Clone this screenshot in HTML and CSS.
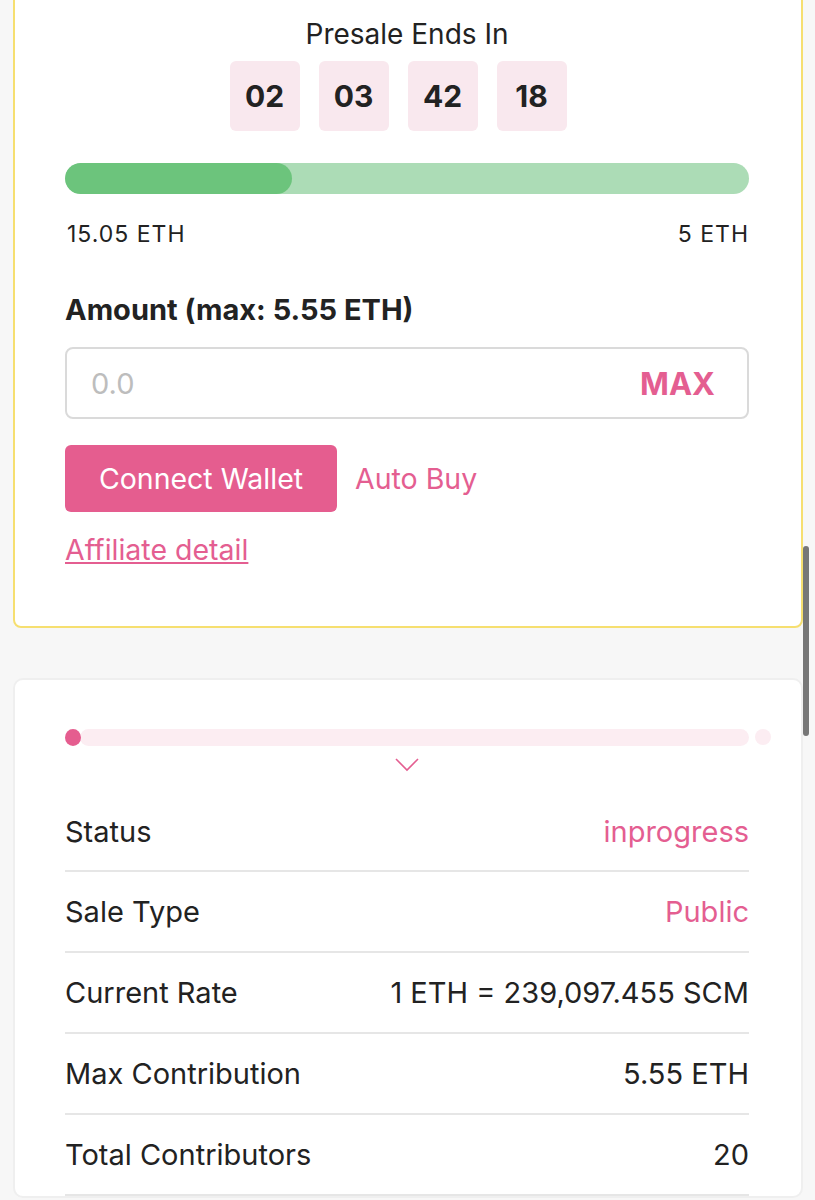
FILE: index.html
```html
<!DOCTYPE html>
<html>
  <head>
    <title>Presale</title>
    <link rel="stylesheet" href="styles.css">
  </head>
  <body>
    <div class="page">
      <section class="sale-card">
        <h2 class="countdown__title">Presale Ends In</h2>
        <div class="countdown">
          <span class="countdown__cell">02</span>
          <span class="countdown__cell">03</span>
          <span class="countdown__cell">42</span>
          <span class="countdown__cell">18</span>
        </div>

        <div class="raise-bar"><div class="raise-bar__fill" style="width: 33.2%"></div></div>
        <div class="raise-labels">
          <span>15.05 ETH</span>
          <span>5 ETH</span>
        </div>

        <label class="amount-label" for="amount">Amount (max: 5.55 ETH)</label>
        <div class="amount-field">
          <input id="amount" class="amount-field__input" type="text" placeholder="0.0">
          <button class="amount-field__max" type="button">MAX</button>
        </div>

        <div class="actions">
          <button class="btn-connect" type="button">Connect Wallet</button>
          <a class="link-auto" href="#">Auto Buy</a>
        </div>

        <a class="link-affiliate" href="#">Affiliate detail</a>
      </section>

      <section class="info-card">
        <div class="stage">
          <span class="stage__dot"></span>
          <span class="stage__track"></span>
          <span class="stage__end"></span>
        </div>
        <div class="stage__toggle">
          <svg width="24" height="14" viewBox="0 0 24 14"><path d="M1 1 L12 12 L23 1" fill="none" stroke="#e45e91" stroke-width="1.6"/></svg>
        </div>

        <ul class="info-list">
          <li class="info-row"><span>Status</span><span class="info-row__value--pink">inprogress</span></li>
          <li class="info-row"><span>Sale Type</span><span class="info-row__value--pink">Public</span></li>
          <li class="info-row"><span>Current Rate</span><span>1 ETH = 239,097.455 SCM</span></li>
          <li class="info-row"><span>Max Contribution</span><span>5.55 ETH</span></li>
          <li class="info-row"><span>Total Contributors</span><span>20</span></li>
        </ul>
      </section>
    </div>
    <div class="scroll-thumb"></div>
  </body>
</html>
```

FILE: styles.css
```css
body {
  margin: 0;
  background: #f7f7f7;
  font-family: Inter, Roboto, "Liberation Sans", Arial, sans-serif;
  color: #222;
  overflow: hidden;
}

.page {
  padding: 0 12px 0 13px;
}

.sale-card {
  margin-top: -12px;
  background: #fff;
  border: 2px solid #f6df70;
  border-radius: 8px;
  padding: 28px 52px 60px 50px;
}

.countdown__title {
  margin: 0;
  text-align: center;
  font-size: 28px;
  font-weight: 400;
  line-height: 32px;
}

.countdown {
  display: flex;
  justify-content: center;
  gap: 19px;
  margin-top: 11px;
  padding-right: 18px;
}
.countdown__cell {
  width: 70px;
  height: 70px;
  display: flex;
  align-items: center;
  justify-content: center;
  background: #f9e8ee;
  border-radius: 6px;
  font-size: 30px;
  font-weight: 700;
}

.raise-bar {
  margin-top: 32px;
  height: 31px;
  border-radius: 16px;
  background: #acdcb6;
  overflow: hidden;
}
.raise-bar__fill {
  height: 100%;
  background: #6cc47c;
  border-radius: 16px;
}

.raise-labels {
  display: flex;
  justify-content: space-between;
  margin-top: 27px;
  font-size: 23px;
  letter-spacing: 1px;
  line-height: 26px;
  padding: 0 0 0 2px;
}

.amount-label {
  display: block;
  margin-top: 47px;
  font-size: 29px;
  font-weight: 700;
  line-height: 32px;
}

.amount-field {
  display: flex;
  align-items: center;
  margin-top: 21px;
  height: 72px;
  box-sizing: border-box;
  border: 2px solid #dadada;
  border-radius: 8px;
  padding: 0 32px 0 24px;
}
.amount-field__input {
  flex-grow: 1;
  border: none;
  outline: none;
  font-family: inherit;
  font-size: 29px;
  color: #222;
  padding: 0;
  background: transparent;
}
.amount-field__input::placeholder { color: #bdbdbd; }
.amount-field__max {
  border: none;
  background: none;
  padding: 0;
  font-family: inherit;
  font-size: 31px;
  font-weight: 700;
  color: #e45e91;
}

.actions {
  display: flex;
  align-items: center;
  gap: 18px;
  margin-top: 26px;
}
.btn-connect {
  width: 272px;
  height: 67px;
  border: none;
  border-radius: 6px;
  background: #e55d8f;
  color: #fff;
  font-family: inherit;
  font-size: 28.5px;
}
.link-auto {
  color: #e45e91;
  text-decoration: none;
  font-size: 28.5px;
}

.link-affiliate {
  display: inline-block;
  margin-top: 22px;
  color: #e45e91;
  font-size: 28.5px;
  line-height: 32px;
}

.info-card {
  margin-top: 50px;
  background: #fff;
  border: 2px solid #efefef;
  border-radius: 10px;
  padding: 48px 52px 0 50px;
}

.stage {
  display: flex;
  align-items: center;
  height: 18px;
}
.stage__dot {
  position: relative;
  z-index: 1;
  width: 16px;
  height: 17px;
  border-radius: 50%;
  background: #e55d8f;
  flex-shrink: 0;
}
.stage__track {
  flex-grow: 1;
  height: 17px;
  margin-left: -1px;
  border-radius: 9px;
  background: #fcedf2;
}
.stage__end {
  width: 16px;
  height: 16px;
  margin-left: 6px;
  margin-right: -22px;
  border-radius: 50%;
  background: #fcedf2;
  flex-shrink: 0;
}
.stage__toggle {
  display: flex;
  justify-content: center;
  margin-top: 12px;
}

.info-list {
  list-style: none;
  margin: 20px 0 0;
  padding: 0;
}
.info-row {
  display: flex;
  justify-content: space-between;
  align-items: center;
  height: 78px;
  border-bottom: 2px solid #e6e6e6;
  font-size: 29px;
}
.info-row + .info-row { height: 79px; }
.info-row__value--pink { color: #e45e91; }

.scroll-thumb {
  position: absolute;
  left: 803px;
  top: 546px;
  width: 6px;
  height: 190px;
  border-radius: 3px;
  background: #777;
}
```
